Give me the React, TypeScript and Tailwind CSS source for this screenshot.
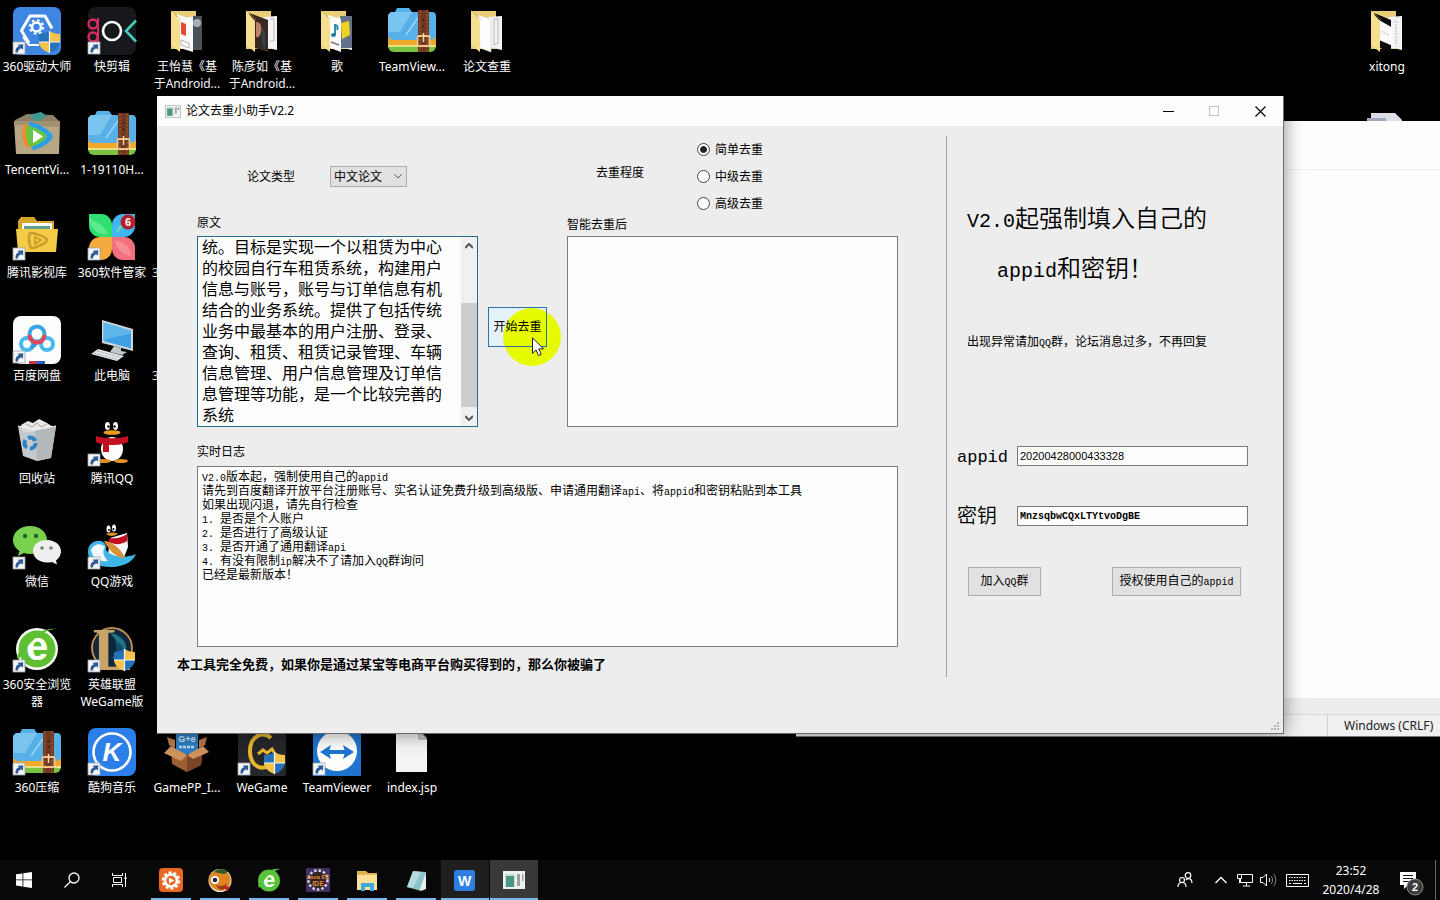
import { useState } from 'react';
import type { ReactNode } from 'react';

type Shortcut = {
    label: string;
    icon?: ReactNode;
    arrow?: boolean;
    clipped?: boolean;
};

/* ---------- shared icon parts ---------- */

function Arrow() {
    return (
        <g>
            <rect x="0" y="35" width="12" height="12" fill="#f4f6f8" stroke="#9aa3ad" strokeWidth="0.8" />
            <path d="M2.5 45.5c-.3-3.500 1-5.500 3.600-6.200l-1.500-1.600 5.600-.5-.2 5.600-1.600-1.600c-2.200.7-3.300 2-3.500 4.300z" fill="#2f5b96" />
        </g>
    );
}

function Shield() {
    return (
        <g>
            <path d="M26 27c4 0 8-1 10.500-3v11H26z" fill="#2672b8" />
            <path d="M36.500 24c3 2 6.500 3 10.500 3v8H36.500z" fill="#f7c24a" />
            <path d="M26 35h10.500v11C30 43.500 26.300 40 26 35z" fill="#f7c24a" />
            <path d="M36.500 35H47c-.5 5-4 8.500-10.500 11z" fill="#2672b8" />
            <path d="M36.500 24v22M26 35h21" stroke="#f4f6f8" strokeWidth="1.200" />
        </g>
    );
}

function Svg({ children, arrow }: { children: ReactNode; arrow?: boolean }) {
    return (
        <svg viewBox="0 0 48 48" className="w-12 h-12 shrink-0 overflow-visible" aria-hidden="true">
            {children}
            {arrow && <Arrow />}
        </svg>
    );
}

/* ---------- desktop icons ---------- */

const driverIcon = (
    <g>
        <rect width="48" height="48" rx="7" fill="#3f86e2" />
        <path d="M16 36L8.500 23.500 17 9h15l7 12.500" fill="none" stroke="#fff" strokeWidth="3" strokeLinejoin="round" />
        <path d="M10 30l6 8h10" fill="none" stroke="#fff" strokeWidth="2" />
        <circle cx="23.500" cy="20" r="4.500" fill="none" stroke="#fff" strokeWidth="2.600" />
        <circle cx="23.500" cy="20" r="6.800" fill="none" stroke="#fff" strokeWidth="2" strokeDasharray="2.700 2.700" />
        <Shield />
    </g>
);

const cutIcon = (
    <g>
        <rect width="48" height="48" rx="8" fill="#16181b" />
        <circle cx="5" cy="17" r="4.500" fill="none" stroke="#d82b62" strokeWidth="2.400" />
        <circle cx="5" cy="30" r="4.500" fill="none" stroke="#d82b62" strokeWidth="2.400" />
        <path d="M10 11v24" stroke="#d82b62" strokeWidth="2" />
        <circle cx="24" cy="24" r="9" fill="none" stroke="#fff" strokeWidth="2.600" />
        <path d="M48 13.500L38 24l10 10.500" fill="none" stroke="#3ed0bd" strokeWidth="2.600" />
    </g>
);

const zipIcon = (
    <g>
        <path d="M0 30h48v9a6 6 0 0 1-6 6H6a6 6 0 0 1-6-6z" fill="#7cc242" />
        <path d="M0 27h48v12H0z" fill="#f0a92b" />
        <path d="M0 38h48v2H0z" fill="#fff3b0" opacity=".7" />
        <path d="M0 8l3-3h4l2-4h12l3 4h20a4 4 0 0 1 4 4v19a5 5 0 0 1-5 5H5a5 5 0 0 1-5-5z" fill="#57b0e8" />
        <path d="M0 8l3-3h21L12 25H0z" fill="#8ed0f5" opacity=".65" />
        <path d="M18 28L34 5" stroke="#9bd6f7" strokeWidth="1.500" />
        <path d="M30 3h11v42H30z" fill="#70391f" />
        <path d="M32 4v40M39 4v40" stroke="#a9683f" strokeWidth="1" strokeDasharray="2 1.500" />
        <circle cx="35.500" cy="13" r="1" fill="#3a1a0c" />
        <circle cx="35.500" cy="19" r="1" fill="#3a1a0c" />
        <rect x="29.500" y="29" width="12" height="10" rx="1.500" fill="none" stroke="#f2c58a" strokeWidth="1.800" />
        <path d="M35.500 26v9" stroke="#f6dbae" strokeWidth="1.500" />
    </g>
);

function folder(inside: ReactNode) {
    return (
        <g>
            <path d="M8 4h25v38H8z" fill="#e9cd77" />
            <path d="M25 10l14-1v34l-14-3z" fill="#f3f3f3" />
            {inside}
            <path d="M8 4l9 10v31l-9-7z" fill="#f7df92" />
            <path d="M8 4h1l9 9" stroke="#caa84f" strokeWidth=".6" fill="none" />
        </g>
    );
}

const folderPdf = folder(
    <g>
        <path d="M30 9h9v34h-9z" fill="#4b5158" />
        <circle cx="34" cy="16" r="4" fill="#a7b0b6" />
        <path d="M14 7l16 6v32l-13-4z" fill="#fafafa" />
        <path d="M18 15l5 2v12l-5-2z" fill="#e24c34" />
        <path d="M18 33l8 3v5l-8-3z" fill="none" stroke="#b5b5b5" />
    </g>,
);

const folderPhoto = folder(
    <g>
        <path d="M32 12h4v22h-4" fill="none" stroke="#aaa" strokeWidth=".8" />
        <path d="M11 6l19 7v32l-13-4z" fill="#3b2722" />
        <path d="M18 15c5 0 6 5 5 10s-3 6-5 5z" fill="#b98069" />
        <path d="M24 20l3 6v16l-3-5z" fill="#29484d" />
    </g>,
);

const folderMusic = folder(
    <g>
        <path d="M27 9h12v32H27z" fill="#65718b" />
        <path d="M28 16l8-2 1 14-8 4z" fill="#f1d21f" />
        <path d="M15 8l13 4v33l-11-4z" fill="#fbfbfb" />
        <path d="M22 17v11M22 18c3 0 3 3 2 5" stroke="#1f7fa6" strokeWidth="1.800" fill="none" />
        <ellipse cx="20.500" cy="28" rx="2.500" ry="2" fill="#1f7fa6" />
        <path d="M18 35l8 3" stroke="#777" strokeWidth="1.500" />
    </g>,
);

const folderPaper = folder(
    <g>
        <path d="M31 12h4v24l-4 2z" fill="none" stroke="#b9b9b9" />
        <path d="M15 8l13 4v33l-11-4z" fill="#fdfdfd" stroke="#d0d0d0" strokeWidth=".6" />
    </g>,
);

const folderDark = folder(
    <g>
        <path d="M11 6l17 7v32l-11-4z" fill="#0c0c0c" />
        <path d="M16 13l14 8v18l-14-6z" fill="#fbfbfb" />
        <path d="M18 24l8 4" stroke="#bbb" strokeWidth=".8" />
        <path d="M33 14v24" stroke="#b4b4b4" strokeDasharray="2 1" />
    </g>,
);

const tencentVideoIcon = (
    <g>
        <path d="M2 10l12-6 26 1 6 6v5H2z" fill="#8b8168" />
        <path d="M16 5l12-3 6 4-10 6z" fill="#3d9a8e" />
        <path d="M1 11h46l-1 33H3z" fill="#b8a785" />
        <path d="M1 11h46v6L2 15z" fill="#a29271" />
        <path d="M16 12c8 0 22 9 24 14 0 5-12 13-20 14-6-7-8-18-4-28z" fill="#2c9fe6" />
        <path d="M11 14c-3 8-2 18 3 24l6-1-3-22z" fill="#f58a2c" />
        <path d="M14 15c7 2 18 7 20 11-1 5-10 9-17 11-4-6-5-16-3-22z" fill="#68c443" />
        <path d="M20 20l10 6.500-10 6.500z" fill="#fff" />
    </g>
);

const videoLibIcon = (
    <g>
        <path d="M5 8l3-4h13l3 4h17v8H5z" fill="#d6a62a" />
        <path d="M9 10h30v10H9z" fill="#fafafa" />
        <path d="M11 13h26v6H11z" fill="#5f9f92" />
        <path d="M3 16h42l-2 23H5z" fill="#f3cb47" />
        <path d="M17 20c5 0 17 4 17 7s-11 8-16 8c-2-4-3-11-1-15z" fill="none" stroke="#c79e2c" strokeWidth="2.500" />
        <path d="M22 24l6 3-6 4z" fill="none" stroke="#c79e2c" strokeWidth="1.800" />
    </g>
);

const softIcon = (
    <g>
        <path d="M1 1h12a11 11 0 0 1 11 11v12H12A11 11 0 0 1 1 13z" fill="#2fe070" />
        <path d="M47 1H35a11 11 0 0 0-11 11v12h12a11 11 0 0 0 11-11z" fill="#41b4f1" />
        <path d="M1 47V35a11 11 0 0 1 11-11h12v12a11 11 0 0 1-11 11z" fill="#f2ab3c" />
        <path d="M47 47V35a11 11 0 0 0-11-11H24v12a11 11 0 0 0 11 11z" fill="#f2707d" />
        <path d="M1 5c7 5 14 5 19 16-9 2-17-4-19-16zM28 21c0-7 5-11 14-15" fill="#7df0a2" opacity=".6" />
        <path d="M43 43c-8-1-14-6-16-15 9 0 15 5 16 15z" fill="#fb9aa0" opacity=".7" />
        <circle cx="40" cy="9" r="7.500" fill="#b3202c" />
        <text x="40" y="13" fontSize="11" fontWeight="700" fill="#fff" textAnchor="middle" fontFamily="Liberation Sans, sans-serif">6</text>
    </g>
);

const netdiskIcon = (
    <g>
        <rect width="48" height="48" rx="8" fill="#fdfdfd" />
        <circle cx="14" cy="28" r="6" fill="none" stroke="#48b9ee" strokeWidth="4" />
        <circle cx="34" cy="28" r="6" fill="none" stroke="#48b9ee" strokeWidth="4" />
        <path d="M18 32l10-9" stroke="#2f9ce2" strokeWidth="4" />
        <circle cx="24" cy="18" r="7.500" fill="#fdfdfd" stroke="#3ba6e4" strokeWidth="4" />
        <path d="M16.500 19a7.500 7.500 0 0 0 15 0" fill="none" stroke="#e4475c" strokeWidth="4" />
        <path d="M16 45h8v3h-8z" fill="#c9364a" />
        <path d="M24 45h8v3h-8z" fill="#2a62c9" />
    </g>
);

const computerIcon = (
    <g>
        <path d="M14 4l31 9v22l-31-8z" fill="#cfd6da" />
        <path d="M15.500 6.500L43 14.500v18L15.500 25z" fill="#3ba1e3" />
        <path d="M15.500 6.500L43 14.500v3L15.500 24z" fill="#74c3f2" opacity=".6" />
        <path d="M26 30l7 2v3l6 1-5 3-12-3z" fill="#c2c8cc" />
        <path d="M10 33l26 7-7 5L3 38z" fill="#e5e8ea" />
        <path d="M9 35l24 6.500M6 37l24 6.500" stroke="#8d9599" strokeWidth=".8" strokeDasharray="2 1" />
    </g>
);

const binIcon = (
    <g>
        <path d="M8 6l7-4 5 2 6-4 8 4 6 4-4 5H10z" fill="#e8e8e8" />
        <path d="M13 5l6 3 5-4 4 4 6-3" fill="none" stroke="#a5a5a5" />
        <path d="M5 7l17 4 21-4-5 32-14 3-14-5z" fill="#d5d8da" opacity=".93" />
        <path d="M22 11l21-4-5 32-14 3z" fill="#b3b8bb" />
        <path d="M5 7l17 4 21-4" fill="none" stroke="#f5f5f5" />
        <circle cx="17" cy="24" r="5.500" fill="none" stroke="#2a83c4" strokeWidth="4" strokeDasharray="8.500 3" />
    </g>
);

const qqIcon = (
    <g>
        <ellipse cx="24" cy="11" rx="11" ry="11" fill="#050505" />
        <ellipse cx="24" cy="30" rx="14" ry="13" fill="#050505" />
        <ellipse cx="24" cy="30" rx="11" ry="12" fill="#fdfdfd" />
        <ellipse cx="19.500" cy="7" rx="2.500" ry="4" fill="#fff" />
        <ellipse cx="27.500" cy="7" rx="2.500" ry="4" fill="#fff" />
        <circle cx="20.500" cy="7.500" r="1.200" />
        <circle cx="26.500" cy="7.500" r="1.200" />
        <ellipse cx="24" cy="13.500" rx="8.500" ry="2.300" fill="#e79b20" />
        <path d="M8 17c9 3 23 3 32 0v6c-7 3-12 3-19 3v7h-6v-8c-3 0-5-1-7-2z" fill="#c20f22" />
        <ellipse cx="15" cy="42" rx="8" ry="2" fill="#dd9023" />
        <ellipse cx="33" cy="42" rx="7" ry="2" fill="#dd9023" />
    </g>
);

const wechatIcon = (
    <g>
        <path d="M17 4c9.500 0 17 6 17 14s-7.500 14-17 14c-2 0-4-.3-6-.9L5 34l1.500-5C2.500 26.500 0 22.500 0 18 0 10 7.500 4 17 4z" fill="#79d14e" />
        <circle cx="12" cy="14" r="2.200" fill="#22652a" />
        <circle cx="23" cy="14" r="2.200" fill="#22652a" />
        <path d="M34 18c8 0 14 5 14 11.500 0 3.500-2 6.500-5 9l1 4-5-2.500c-1.500.4-3.300.6-5 .6-8 0-14-5-14-11.500S26 18 34 18z" fill="#efefef" />
        <circle cx="29" cy="26" r="1.800" fill="#7b7b7b" />
        <circle cx="38" cy="26" r="1.800" fill="#7b7b7b" />
    </g>
);

const qqGameIcon = (
    <g>
        <path d="M22 16l17-5 1 14-5 13-15-5z" fill="#f7f7f7" />
        <ellipse cx="20.500" cy="7" rx="2" ry="3.500" fill="#fff" />
        <ellipse cx="26" cy="6" rx="2" ry="3.500" fill="#fff" />
        <circle cx="21" cy="8" r="1" />
        <circle cx="25.500" cy="7" r="1" />
        <path d="M18 12c4-2 9-2 12 0-3 2-8 3-12 0z" fill="#dd9023" />
        <path d="M22 16c6 1 11 0 17-4v7c-6 4-12 4-18 1z" fill="#c20f22" />
        <path d="M0 30c0-8 6-12 13-11 4 1 6 5 5 9 5 7 20 9 30 4-5 12-22 15-35 12-8-2-13-7-13-14z" fill="#3fb5e8" />
        <path d="M3 28c2-6 10-8 14-3-3 4-2 9 3 14-9 1-16-3-17-11z" fill="#f2f8fb" />
        <path d="M16 19c7 0 17 7 21 17-8 0-15-6-21-17z" fill="#d8913b" />
    </g>
);

const browserIcon = (
    <g>
        <circle cx="24" cy="24" r="21" fill="#f7fbf2" />
        <circle cx="24" cy="24" r="18.500" fill="#5ebf33" />
        <text x="24" y="35" fontSize="40" fontWeight="700" fill="#fff" textAnchor="middle" fontFamily="Liberation Sans, sans-serif">e</text>
        <path d="M4 33C7 17 28 1 44 4c-12 0-26 9-38 30z" fill="#5ebf33" />
    </g>
);

const lolIcon = (
    <g>
        <circle cx="24" cy="23" r="20" fill="#10263b" stroke="#b98d4b" strokeWidth="2" />
        <path d="M22 8c12 2 18 10 16 20-6-2-8-12-16-20z" fill="#1d7589" />
        <path d="M27 16c2 8 2 14-5 18 12 0 15-6 12-14z" fill="#134c6b" />
        <text x="25" y="45" fontSize="61" fontWeight="700" fill="#c8a468" textAnchor="middle" fontFamily="Liberation Serif, serif">L</text>
        <Shield />
    </g>
);

const kugouIcon = (
    <g>
        <rect width="48" height="48" rx="8" fill="#2c7fe8" />
        <circle cx="24" cy="24" r="18.500" fill="none" stroke="#fff" strokeWidth="2.600" />
        <text x="24" y="33" fontSize="26" fontWeight="700" fontStyle="italic" fill="#fff" textAnchor="middle" fontFamily="Liberation Sans, sans-serif">K</text>
    </g>
);

const gamePpIcon = (
    <g>
        <path d="M13 2h22v24H13z" fill="#2f7fc5" />
        <text x="24" y="14" fontSize="9" fontWeight="700" fill="#d7ecfb" textAnchor="middle" fontFamily="Liberation Sans, sans-serif">G+e</text>
        <path d="M16 19h16" stroke="#b8dcf5" strokeWidth="2.500" strokeDasharray="3 1" />
        <path d="M8 21l17 6 15-6-2 16-14 7-15-8z" fill="#9c5f36" />
        <path d="M24 27l16-6-2 16-14 7z" fill="#7c4525" />
        <path d="M8 18l-7 7 17 8 6-6zM40 18l6 6-16 7-6-4z" fill="#cf935f" />
        <path d="M4 9l8 3v8l-6-3zM44 9l-8 3v8l6-3z" fill="#b9784a" />
    </g>
);

const weGameIcon = (
    <g>
        <rect width="48" height="48" rx="2" fill="#25272a" />
        <path d="M33 10c-9-8-21-1-21 13 0 13 9 20 18 15" fill="none" stroke="#e7b62b" strokeWidth="4" />
        <path d="M20 26l5-4 4 3 5-4 3 5" fill="none" stroke="#e7b62b" strokeWidth="3" />
        <Shield />
    </g>
);

const teamViewerIcon = (
    <g>
        <path d="M0 0h48v48H0z" fill="#1f74cf" />
        <circle cx="24" cy="23" r="20" fill="#fdfdfd" />
        <path d="M7 24l11-7-1.500 5h15L30 17l11 7-11 7 1.500-5h-15l1.500 5z" fill="#1f74cf" />
    </g>
);

const fileIcon = (
    <g>
        <path d="M8 3h24l7 7v34H8z" fill="#f4f4f4" />
        <path d="M31 3v8h8z" fill="#cfcfcf" stroke="#8d8d8d" strokeWidth=".8" />
    </g>
);

const stackIcon = (
    <g>
        <path d="M8 3h24l7 7v30H8z" fill="#dedfe6" />
        <path d="M4 8h19v30H4z" fill="#9ca9bf" />
    </g>
);

const rows: Shortcut[][] = [
    [
        { label: '360驱动大师', icon: driverIcon, arrow: true },
        { label: '快剪辑', icon: cutIcon, arrow: true },
        { label: '王怡慧《基\n于Android...', icon: folderPdf },
        { label: '陈彦如《基\n于Android...', icon: folderPhoto },
        { label: '歌', icon: folderMusic },
        { label: 'TeamView...', icon: zipIcon },
        { label: '论文查重', icon: folderPaper },
    ],
    [
        { label: 'TencentVi...', icon: tencentVideoIcon },
        { label: '1-19110H...', icon: zipIcon },
    ],
    [
        { label: '腾讯影视库', icon: videoLibIcon, arrow: true },
        { label: '360软件管家', icon: softIcon, arrow: true },
        { label: '3', clipped: true },
    ],
    [
        { label: '百度网盘', icon: netdiskIcon, arrow: true },
        { label: '此电脑', icon: computerIcon },
        { label: '3', clipped: true },
    ],
    [
        { label: '回收站', icon: binIcon },
        { label: '腾讯QQ', icon: qqIcon, arrow: true },
    ],
    [
        { label: '微信', icon: wechatIcon, arrow: true },
        { label: 'QQ游戏', icon: qqGameIcon, arrow: true },
    ],
    [
        { label: '360安全浏览\n器', icon: browserIcon, arrow: true },
        { label: '英雄联盟\nWeGame版', icon: lolIcon, arrow: true },
    ],
    [
        { label: '360压缩', icon: zipIcon, arrow: true },
        { label: '酷狗音乐', icon: kugouIcon, arrow: true },
        { label: 'GamePP_I...', icon: gamePpIcon },
        { label: 'WeGame', icon: weGameIcon, arrow: true },
        { label: 'TeamViewer', icon: teamViewerIcon, arrow: true },
        { label: 'index.jsp', icon: fileIcon },
    ],
];

function DesktopIcon({ item }: { item: Shortcut }) {
    return (
        <div className={item.clipped ? 'w-[74px] h-[103px] flex flex-col items-start pl-[2px]' : 'w-[74px] h-[103px] flex flex-col items-center'}>
            <Svg arrow={item.arrow}>{item.icon}</Svg>
            <span className="mt-[3px] text-xs leading-[17px] text-white text-center whitespace-pre">{item.label}</span>
        </div>
    );
}

/* ---------- tool window ---------- */

const sourceText =
    '统。目标是实现一个以租赁为中心的校园自行车租赁系统，构建用户信息与账号，账号与订单信息有机结合的业务系统。提供了包括传统业务中最基本的用户注册、登录、查询、租赁、租赁记录管理、车辆信息管理、用户信息管理及订单信息管理等功能，是一个比较完善的系统';

const logLines = [
    'V2.0版本起，强制使用自己的appid',
    '请先到百度翻译开放平台注册账号、实名认证免费升级到高级版、申请通用翻译api、将appid和密钥粘贴到本工具',
    '如果出现闪退，请先自行检查',
    '1. 是否是个人账户',
    '2. 是否进行了高级认证',
    '3. 是否开通了通用翻译api',
    '4. 有没有限制ip解决不了请加入QQ群询问',
    '已经是最新版本！',
];

const levels = ['简单去重', '中级去重', '高级去重'];

// Latin runs are set in a half-width mono face next to full-width Chinese
function Mixed({ text, latin = 'text-[10px]' }: { text: string; latin?: string }) {
    return (
        <>
            {text.split(/([\x20-\x7e]+)/).map((part, i) =>
                i % 2 ? (
                    <span key={i} className={`font-['Liberation_Mono',monospace] whitespace-pre ${latin}`}>{part}</span>
                ) : (
                    part
                ),
            )}
        </>
    );
}

function AppGlyph({ className }: { className: string }) {
    return (
        <svg viewBox="0 0 22 18" className={className} aria-hidden="true">
            <rect x=".5" y=".5" width="21" height="17" fill="#f3f5f4" stroke="#a8b0ae" />
            <path d="M2 3h10v12H2z" fill="#c4d6d2" />
            <path d="M3 5h7v10H3z" fill="#4c9686" />
            <path d="M14 3h2v9h-2zM17.500 3h2v4h-2z" fill="#8f9a98" />
        </svg>
    );
}

function ToolWindow() {
    const [level, setLevel] = useState(levels[0]);
    const [source, setSource] = useState(sourceText);
    const [appid, setAppid] = useState('20200428000433328');
    const [secret, setSecret] = useState('MnzsqbwCQxLTYtvoDgBE');

    return (
        <section className="absolute left-[157px] right-[156px] top-[96px] bg-[#ededed] border-r border-b border-[#6a6a6a] shadow-[0_0_18px_rgba(0,0,0,0.45)] text-xs text-black">
            <header className="h-[30px] flex items-center bg-[#fdfdfd] pl-2">
                <AppGlyph className="w-4 h-[13px]" />
                <h1 className="ml-[5px] flex-1 text-xs">论文去重小助手V2.2</h1>
                <button aria-label="最小化" className="w-[46px] h-[30px] grid place-items-center">
                    <svg viewBox="0 0 11 11" className="w-[11px] h-[11px]"><path d="M0 5.500h11" stroke="#000" /></svg>
                </button>
                <button aria-label="最大化" disabled className="w-[46px] h-[30px] grid place-items-center">
                    <svg viewBox="0 0 11 11" className="w-[11px] h-[11px]"><rect x=".5" y=".5" width="9" height="9" fill="none" stroke="#c4c4c4" /></svg>
                </button>
                <button aria-label="关闭" className="w-[46px] h-[30px] grid place-items-center">
                    <svg viewBox="0 0 11 11" className="w-[11px] h-[11px]"><path d="M.5.5l10 10M10.500.5l-10 10" stroke="#000" strokeWidth="1.200" /></svg>
                </button>
            </header>

            <div className="flex pt-[10px] pb-14">
                <div className="flex-1 pb-[3px]">
                    <div className="pl-10 pr-12">
                        <div className="flex items-center pl-[50px]">
                            <label htmlFor="kind">论文类型</label>
                            <div className="relative ml-[35px]">
                                <select id="kind" className="block w-[77px] h-[21px] pl-[3px] appearance-none bg-[#e1e1e1] border border-[#adadad] text-xs leading-[19px]">
                                    <option>中文论文</option>
                                </select>
                                <svg viewBox="0 0 8 5" className="absolute right-[5px] top-2 w-2 h-[5px] pointer-events-none"><path d="M.5.5L4 4 7.500.5" fill="none" stroke="#555" /></svg>
                            </div>
                            <span className="ml-[189px] pb-2" id="level">去重程度</span>
                            <div role="radiogroup" aria-labelledby="level" className="ml-[53px]">
                                {levels.map((name) => (
                                    <label key={name} className="h-[27px] flex items-center gap-[5px]">
                                        <input
                                            type="radio"
                                            name="level"
                                            checked={level === name}
                                            onChange={() => setLevel(name)}
                                            className="appearance-none w-[13px] h-[13px] rounded-full border border-[#444] bg-white checked:bg-[#222] checked:bg-clip-content checked:p-[2px] checked:shadow-[inset_0_0_0_2px_#fff]"
                                        />
                                        {name}
                                    </label>
                                ))}
                            </div>
                        </div>

                        <div className="flex items-start">
                            <div className="w-[281px]">
                                <label htmlFor="source" className="block h-[19px] leading-[12px]">原文</label>
                                <div className="h-[191px] flex border border-[#1f6f8b] bg-[#fdfdfd]">
                                    <textarea
                                        id="source"
                                        value={source}
                                        onChange={(e) => setSource(e.target.value)}
                                        className="flex-1 min-w-0 resize-none overflow-hidden outline-none px-1 text-base leading-[21px]"
                                    />
                                    <div className="w-4 flex flex-col items-center bg-[#f0f0f0]">
                                        <svg viewBox="0 0 8 6" className="w-2 h-[6px] mt-[6px]"><path d="M0 5l4-4 4 4" fill="none" stroke="#555" strokeWidth="2" /></svg>
                                        <div className="w-full h-[104px] mt-auto bg-[#cdcdcd]" />
                                        <svg viewBox="0 0 8 6" className="w-2 h-[6px] mt-2 mb-[5px]"><path d="M0 1l4 4 4-4" fill="none" stroke="#555" strokeWidth="2" /></svg>
                                    </div>
                                </div>
                            </div>

                            <div className="relative ml-[10px] mt-[90px]">
                                <button className="relative block w-[59px] h-10 bg-[#e5f1fb]">
                                    {/* click highlight sits between the face and its caption */}
                                    <span className="absolute left-[15px] top-px w-[58px] h-[58px] rounded-full bg-[#e6fb00]" />
                                    <span className="absolute inset-0 border border-[#2a75ad]" />
                                    <span className="relative whitespace-nowrap">开始去重</span>
                                </button>
                                <svg viewBox="0 0 12 20" className="absolute left-[44px] top-[30px] w-3 h-5 pointer-events-none">
                                    <path d="M.5.8v15.500l3.600-3.400 2.400 5.700 2.700-1.100-2.400-5.600h4.700z" fill="#fff" stroke="#222" strokeWidth="1" />
                                </svg>
                            </div>

                            <div className="flex-1 ml-5">
                                <label htmlFor="result" className="block h-[19px] leading-[16px]">智能去重后</label>
                                <textarea id="result" readOnly className="block w-full h-[191px] resize-none outline-none bg-[#fdfdfd] border border-[#7a7a7a]" />
                            </div>
                        </div>

                        <h2 className="mt-[19px] text-xs leading-[12px]" id="log">实时日志</h2>
                        <div role="log" aria-labelledby="log" className="mt-2 h-[181px] pt-[3px] pl-1 bg-[#fdfdfd] border border-[#7a7a7a] overflow-hidden whitespace-nowrap">
                            {logLines.map((line) => (
                                <p key={line} className="h-[14px] leading-[14px]"><Mixed text={line} /></p>
                            ))}
                        </div>
                    </div>
                    <p className="mt-[7px] pl-5 text-[13px] leading-5 font-bold">本工具完全免费，如果你是通过某宝等电商平台购买得到的，那么你被骗了</p>
                </div>

                <aside className="w-[337px] border-l border-[#a0a0a0] pl-[10px]">
                    <div className="mt-[57px] pl-[10px] text-2xl leading-[50px] font-[350]">
                        <p className="h-[50px]"><Mixed text="V2.0起强制填入自己的" latin="text-[20px] leading-none" /></p>
                        <p className="h-[50px] pl-[30px]"><Mixed text="appid和密钥！" latin="text-[20px] leading-none" /></p>
                    </div>
                    <p className="mt-[39px] h-5 pl-[10px] leading-5"><Mixed text="出现异常请加QQ群，论坛消息过多，不再回复" /></p>

                    <div className="mt-[94px] h-5 flex items-center">
                        <label htmlFor="appid" className="w-[60px] text-xl leading-5 font-[350]"><Mixed text="appid" latin="text-[17px]" /></label>
                        <input
                            id="appid"
                            value={appid}
                            onChange={(e) => setAppid(e.target.value)}
                            className="w-[231px] h-5 px-[2px] bg-[#fdfdfd] border border-[#7a7a7a] outline-none text-[11px] font-['Liberation_Sans',sans-serif]"
                        />
                    </div>
                    <div className="mt-10 h-5 flex items-center">
                        <label htmlFor="secret" className="w-[60px] text-xl leading-5 font-[350]">密钥</label>
                        <input
                            id="secret"
                            value={secret}
                            onChange={(e) => setSecret(e.target.value)}
                            className="w-[231px] h-5 px-[2px] bg-[#fdfdfd] border border-[#7a7a7a] outline-none text-[10px] font-bold font-['Liberation_Mono',monospace]"
                        />
                    </div>

                    <div className="mt-[41px] pl-[11px] flex gap-[71px]">
                        <button className="w-[73px] h-[29px] bg-[#e1e1e1] border border-[#adadad]"><Mixed text="加入QQ群" /></button>
                        <button className="w-[129px] h-[29px] bg-[#e1e1e1] border border-[#adadad]"><Mixed text="授权使用自己的appid" /></button>
                    </div>
                </aside>
            </div>

            <svg viewBox="0 0 9 9" className="absolute right-[3px] bottom-[2px] w-[9px] h-[9px]" fill="#b4b4b4" aria-hidden="true">
                <path d="M6 0h2v2H6zM3 3h2v2H3zM6 3h2v2H6zM0 6h2v2H0zM3 6h2v2H3zM6 6h2v2H6z" />
            </svg>
        </section>
    );
}

function NotepadWindow() {
    return (
        <section className="absolute left-[796px] right-0 top-[121px] bottom-[123px] flex flex-col bg-[#fdfdfd] border-b border-[#777]">
            <div className="h-[49px] border-b border-[#ececec]" />
            <div className="flex-1" />
            <div className="h-4 bg-[#ededed]" />
            <footer className="h-[22px] flex justify-end bg-[#f0f0f0] border-t border-[#d8d8d8]">
                <span className="w-[113px] border-l border-[#d0d0d0] pl-4 text-xs leading-[21px] text-[#222] whitespace-nowrap">Windows (CRLF)</span>
            </footer>
        </section>
    );
}

/* ---------- taskbar ---------- */

const recorderTask = (
    <g>
        <rect width="24" height="24" rx="4" fill="#e8661f" />
        <circle cx="12" cy="12.500" r="8" fill="none" stroke="#fff" strokeWidth="2.500" strokeDasharray="3 2" />
        <circle cx="12" cy="12.500" r="6" fill="none" stroke="#fff" strokeWidth="2.500" />
        <path d="M10 9.500l5.500 3-5.500 3z" fill="#fff" />
    </g>
);

const fishTask = (
    <g>
        <circle cx="12" cy="12.500" r="11.500" fill="#f0ecd8" />
        <path d="M2 7c5-7 15-7 20 1 2 7-1 13-9 15C4 22-1 16 2 7z" fill="#df8420" />
        <path d="M6 4c4-4 10-4 14 0l-4 2z" fill="#2c5c2a" />
        <circle cx="7" cy="12" r="4" fill="#fff" />
        <circle cx="7" cy="12" r="2.300" fill="#1d2430" />
        <path d="M8 17c4 2 8 1 11-2l-2 6c-4 2-7 0-9-4z" fill="#9d3b14" />
        <path d="M16 18l6 1-3 5z" fill="#c92222" />
    </g>
);

const browserTask = (
    <g>
        <circle cx="12" cy="12.500" r="11" fill="#57c23b" />
        <text x="12" y="19" fontSize="22" fontWeight="700" fill="#fff" textAnchor="middle" fontFamily="Liberation Sans, sans-serif">e</text>
        <path d="M1 18C3 8 14-1 23 1 15 3 7 10 3 20z" fill="#57c23b" />
    </g>
);

const javaTask = (
    <g>
        <rect width="24" height="24" fill="#40305f" />
        <circle cx="12" cy="12" r="9.500" fill="none" stroke="#d8d3df" strokeWidth="2.500" strokeDasharray="2.500 2" />
        <circle cx="12" cy="12" r="8" fill="#33221f" />
        <text x="12" y="11" fontSize="6" fontWeight="700" fill="#e08a3c" textAnchor="middle" fontFamily="Liberation Sans, sans-serif">Java EE</text>
        <text x="12" y="18" fontSize="7" fontWeight="700" fill="#e08a3c" textAnchor="middle" fontFamily="Liberation Sans, sans-serif">IDE</text>
    </g>
);

const explorerTask = (
    <g>
        <path d="M2 3h9l2 2h9v17H2z" fill="#e0b552" />
        <path d="M2 7h20v15H2z" fill="#fbe195" />
        <path d="M6 23v-8h13v8h-4v-4h-5v4z" fill="#3fa9dc" />
    </g>
);

const notepadTask = (
    <g>
        <path d="M9 3l13 1-5 19-14-4z" fill="#8cc2cc" />
        <path d="M9 3l8 1-8 16-6-1z" fill="#bfe1e6" opacity=".8" />
        <path d="M22 4v17l-5 2-1-2z" fill="#e9edee" />
    </g>
);

const wpsTask = (
    <g>
        <rect x="1" y="2" width="21" height="21" rx="3" fill="#2f7fe2" />
        <text x="11.500" y="18" fontSize="14" fontWeight="700" fill="#fff" textAnchor="middle" fontFamily="Liberation Sans, sans-serif">W</text>
    </g>
);

const toolTask = (
    <g>
        <rect x="1" y="3" width="22" height="18" fill="#eef1f0" />
        <path d="M3 6h10v13H3z" fill="#cfdbd8" />
        <path d="M4 8h8v11H4z" fill="#4c9686" />
        <path d="M15 6h3v12h-3zM20 6h1.500v7H20z" fill="#98a3a1" />
    </g>
);

const tasks = [
    { name: '录屏', icon: recorderTask },
    { name: '浏览', icon: fishTask },
    { name: '360安全浏览器', icon: browserTask },
    { name: 'Java EE IDE', icon: javaTask },
    { name: '文件资源管理器', icon: explorerTask },
    { name: '记事本', icon: notepadTask },
    { name: 'WPS', icon: wpsTask, bg: 'bg-[#1f1f1f]' },
    { name: '论文去重小助手', icon: toolTask, bg: 'bg-[#383838]' },
];

function Taskbar() {
    return (
        <footer className="h-10 flex items-stretch bg-[#080808] text-white">
            <button aria-label="开始" className="w-12 grid place-items-center">
                <svg viewBox="0 0 16 16" className="w-4 h-4" fill="#fff"><path d="M0 2.300l6.500-.9v6.100H0zM7.300 1.300L16 0v7.500H7.300zM0 8.300h6.500v6.200L0 13.600zM7.300 8.300H16V16l-8.700-1.300z" /></svg>
            </button>
            <button aria-label="搜索" className="w-12 grid place-items-center">
                <svg viewBox="0 0 16 16" className="w-4 h-4" fill="none" stroke="#fff" strokeWidth="1.300"><circle cx="10" cy="6" r="5" /><path d="M6.500 9.500L.5 15.500" /></svg>
            </button>
            <button aria-label="任务视图" className="w-12 grid place-items-center">
                <svg viewBox="0 0 16 16" className="w-4 h-4" fill="none" stroke="#fff"><path d="M.5 1v2.500h10V1M.5 15v-2.500h10V15M1.500 5.500h8v5h-8zM13.500 1v14M12 6h3" /></svg>
            </button>
            <nav className="ml-[3px] flex gap-px">
                {tasks.map((task) => (
                    <button key={task.name} aria-label={task.name} className={`w-12 flex flex-col items-center pt-2 ${task.bg ?? ''}`}>
                        <svg viewBox="0 0 24 24" className="w-6 h-6 overflow-visible">{task.icon}</svg>
                        <span className={task.bg ? 'mt-auto w-full h-[2px] bg-[#76b9ed]' : 'mt-auto w-10 h-[2px] bg-[#76b9ed]'} />
                    </button>
                ))}
            </nav>

            <div className="ml-auto flex items-center">
                <svg viewBox="0 0 16 16" className="w-4 h-4" fill="none" stroke="#fff" strokeWidth="1.200">
                    <circle cx="5" cy="8" r="2.500" /><path d="M1 15c0-6 8-6 8 0" /><circle cx="11" cy="3.500" r="2.800" /><path d="M9 8c3-3 6-1 6 3" />
                </svg>
                <svg viewBox="0 0 12 8" className="ml-[22px] w-3 h-2" fill="none" stroke="#fff" strokeWidth="1.300"><path d="M.5 7L6 1.500 11.500 7" /></svg>
                <svg viewBox="0 0 16 14" className="ml-[10px] w-4 h-[14px]" fill="none" stroke="#fff"><path d="M5 1.500h10.500v8H3.500V6M9.500 9.500v3M6 13h7M.5 1.500h4v4h-4zM2.500 5.500V10" /></svg>
                <svg viewBox="0 0 17 14" className="ml-[7px] w-[17px] h-[14px]" fill="none" stroke="#fff"><path d="M.5 4.500H3l3.500-3.500v12L3 9.500H.5zM9 5c1 1 1 3 0 4" /><path d="M11 3c2 2 2 6 0 8M13.500 1c3 3 3 9 0 12" stroke="#888" /></svg>
                <svg viewBox="0 0 23 13" className="ml-[9px] w-[23px] h-[13px]" fill="none" stroke="#fff"><path d="M.5.5h22v12H.5z" /><path d="M3 3.500h17M3 6.500h17" strokeDasharray="1.500 1" /><path d="M3 9.500h2M7 9.500h9M18 9.500h2" /></svg>
                <div className="w-[84px] text-center text-xs leading-[19px]">
                    <p>23:52</p>
                    <p>2020/4/28</p>
                </div>
                <div className="relative w-[42px] h-10">
                    <svg viewBox="0 0 26 26" className="absolute left-[6px] top-[10px] w-[26px] h-[26px]">
                        <path d="M1 2h16v13H9l-4 4v-4H1z" fill="#fff" />
                        <path d="M4 5.500h10M4 8.500h10M4 11.500h7" stroke="#111" />
                        <circle cx="16" cy="17" r="8" fill="#3c3c3c" stroke="#888" strokeWidth="1" />
                        <text x="16" y="21" fontSize="11" fontWeight="700" fill="#fff" textAnchor="middle" fontFamily="Liberation Sans, sans-serif">2</text>
                    </svg>
                </div>
                <div className="w-[5px] h-10 border-l border-[#666]" />
            </div>
        </footer>
    );
}

export default function App() {
    return (
        <div className="min-h-screen flex flex-col bg-black font-['Noto_Sans','Noto_Sans_CJK_SC',sans-serif]">
            <main className="relative flex-1 overflow-hidden">
                <div className="flex justify-between pt-[7px] pr-4">
                    <div>
                        {rows.map((row, i) => (
                            <div key={i} className="flex gap-px">
                                {row.map((item, j) => <DesktopIcon key={j} item={item} />)}
                            </div>
                        ))}
                    </div>
                    <div>
                        <DesktopIcon item={{ label: 'xitong', icon: folderDark }} />
                        <DesktopIcon item={{ label: '', icon: stackIcon }} />
                    </div>
                </div>
                <NotepadWindow />
                <ToolWindow />
            </main>
            <Taskbar />
        </div>
    );
}
